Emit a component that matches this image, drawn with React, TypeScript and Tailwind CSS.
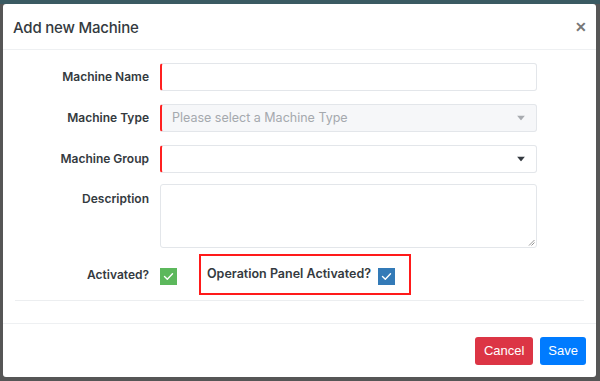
import React from "react";

function Check({ bg }: { bg: string }) {
  return (
    <span className={`inline-flex items-center justify-center w-[17px] h-[17px] ${bg}`}>
      <svg width="11" height="9" viewBox="0 0 11 9" fill="none">
        <path d="M1.5 4.5 L4.3 7.2 L9.5 1.8" stroke="white" strokeWidth="1.4" strokeLinecap="round" strokeLinejoin="round" />
      </svg>
    </span>
  );
}

function Caret({ color }: { color: string }) {
  return (
    <svg width="8" height="5" viewBox="0 0 8 5" className="absolute right-[11px] top-1/2 -translate-y-1/2">
      <path d="M0 0 L8 0 L4 5 Z" fill={color} />
    </svg>
  );
}

export default function App() {
  const font = { fontFamily: "Inter, 'Noto Sans', Arial, sans-serif" };
  return (
    <div className="w-[600px] h-[381px] bg-[#565656] relative overflow-hidden" style={font}>
      <div className="absolute left-0 top-0 w-full h-[4px] bg-[#3a5a62]" />
      <div className="absolute left-[3px] top-[4px] w-[593px] h-[373px] bg-white rounded-[3px] flex flex-col">
        {/* header */}
        <div className="h-[46px] flex items-center justify-between pl-[10px] pr-[9px] border-b border-[#eef0f2]">
          <span className="text-[15px] font-medium text-[#343a40] tracking-[-0.2px] mt-[3px]">Add new Machine</span>
          <span className="text-[#777] text-[14px] font-bold leading-none">✕</span>
        </div>
        {/* body */}
        <div className="px-[12px] pt-[13px] flex flex-col">
          <div className="flex items-center h-[28px]">
            <div className="w-[134px] text-right text-[12px] font-semibold text-[#343a40]">Machine Name</div>
            <div className="ml-[11px] w-[377px] h-[28px] border border-[#e3e6ea] border-l-2 border-l-[#ff2020] rounded-[3px] bg-white" />
          </div>
          <div className="flex items-center h-[28px] mt-[13px]">
            <div className="w-[134px] text-right text-[12px] font-semibold text-[#343a40]">Machine Type</div>
            <div className="ml-[11px] w-[377px] h-[28px] border border-[#e3e6ea] border-l-2 border-l-[#ff2020] rounded-[3px] bg-[#f6f7f9] relative flex items-center pl-[10px]">
              <span className="text-[12.5px] text-[#a5a9ae]">Please select a Machine Type</span>
              <Caret color="#a8abb0" />
            </div>
          </div>
          <div className="flex items-center h-[28px] mt-[13px]">
            <div className="w-[134px] text-right text-[12px] font-semibold text-[#343a40]">Machine Group</div>
            <div className="ml-[11px] w-[377px] h-[28px] border border-[#e3e6ea] border-l-2 border-l-[#ff2020] rounded-[3px] bg-white relative">
              <Caret color="#343a40" />
            </div>
          </div>
          <div className="flex items-start mt-[11px]">
            <div className="w-[134px] text-right text-[12px] font-semibold text-[#343a40] pt-[6px]">Description</div>
            <div className="ml-[11px] w-[377px] h-[64px] border border-[#e3e6ea] rounded-[3px] bg-white relative">
              <svg width="7" height="7" viewBox="0 0 7 7" className="absolute right-[1px] bottom-[1px]">
                <path d="M6.5 1 L1 6.5 M6.5 3.5 L3.5 6.5" stroke="#888" strokeWidth="0.9" />
              </svg>
            </div>
          </div>
          <div className="flex items-center mt-[6px] h-[41px]">
            <div className="w-[134px] text-right text-[12px] font-semibold text-[#343a40]">Activated?</div>
            <div className="ml-[11px]">
              <Check bg="bg-[#5cb85c]" />
            </div>
            <div className="ml-[22px] w-[212px] h-[41px] border-2 border-[#ff1a1a] flex items-center pl-[6px]">
              <span className="text-[12.5px] font-semibold text-[#343a40]">Operation Panel Activated?</span>
              <span className="ml-[7px]">
                <Check bg="bg-[#337ab7]" />
              </span>
            </div>
          </div>
          <div className="mt-[5px] border-t border-[#eceef0]" />
        </div>
        <div className="flex-1" />
        {/* footer */}
        <div className="h-[54px] border-t border-[#eef0f2] flex items-center justify-end pr-[10px] gap-[7px]">
          <button className="h-[28px] px-[9px] rounded-[3px] bg-[#dc3545] text-white text-[13px]" style={{ fontFamily: "'Liberation Sans', Arial, sans-serif" }}>Cancel</button>
          <button className="h-[28px] px-[8px] rounded-[3px] bg-[#007bff] text-white text-[13px]" style={{ fontFamily: "'Liberation Sans', Arial, sans-serif" }}>Save</button>
        </div>
      </div>
    </div>
  );
}
